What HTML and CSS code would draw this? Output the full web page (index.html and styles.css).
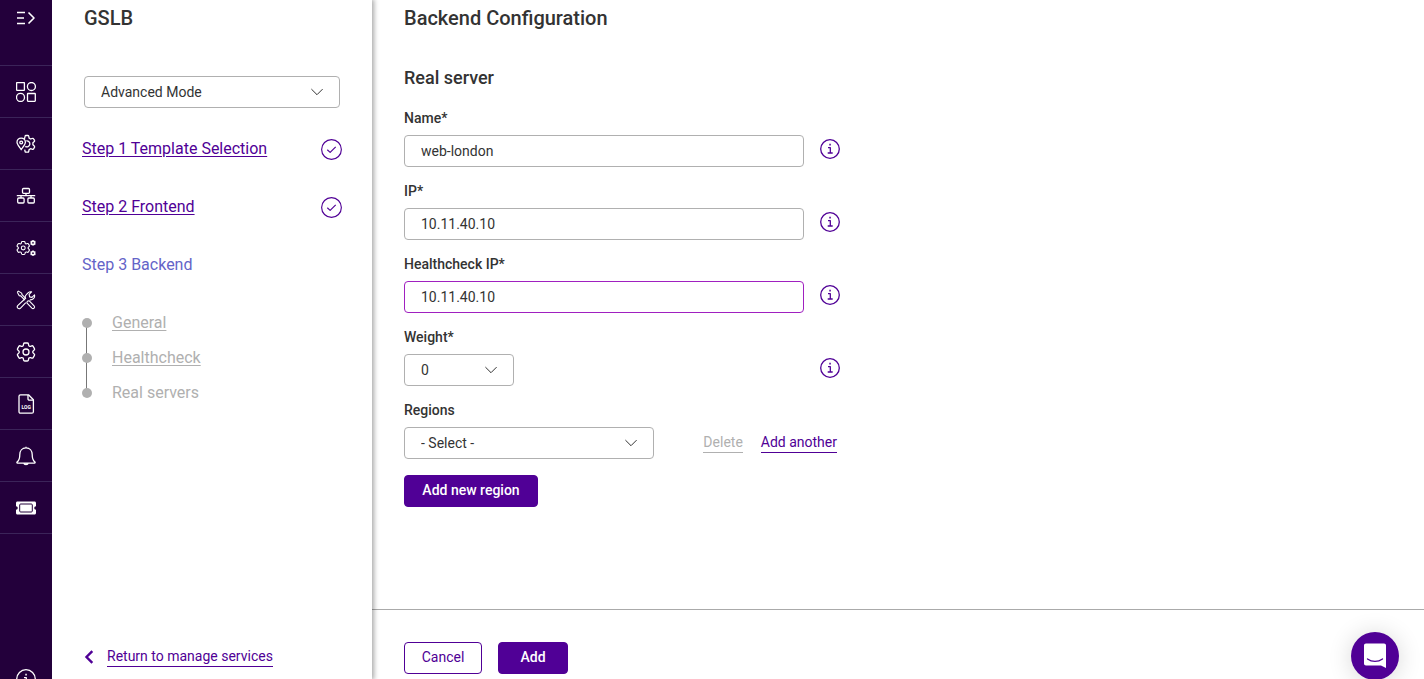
FILE: index.html
```html
<!DOCTYPE html>
<html lang="en">
<head>
<meta charset="utf-8">
<title>GSLB - Backend Configuration</title>
<link rel="stylesheet" href="styles.css">
</head>
<body>
<svg class="defs" aria-hidden="true">
  <defs>
    <path id="gear" d="M9.594 3.94c.09-.542.56-.94 1.11-.94h2.593c.55 0 1.02.398 1.11.94l.213 1.281c.063.374.313.686.645.87.074.04.147.083.22.127.325.196.72.257 1.075.124l1.217-.456a1.125 1.125 0 0 1 1.37.49l1.296 2.247a1.125 1.125 0 0 1-.26 1.431l-1.003.827c-.293.241-.438.613-.43.992a7.723 7.723 0 0 1 0 .255c-.008.378.137.75.43.991l1.004.827c.424.35.534.955.26 1.43l-1.298 2.247a1.125 1.125 0 0 1-1.369.491l-1.217-.456c-.355-.133-.75-.072-1.076.124a6.47 6.47 0 0 1-.22.128c-.331.183-.581.495-.644.869l-.213 1.281c-.09.543-.56.94-1.11.94h-2.594c-.55 0-1.019-.398-1.11-.94l-.213-1.281c-.062-.374-.312-.686-.644-.87a6.52 6.52 0 0 1-.22-.127c-.325-.196-.72-.257-1.076-.124l-1.217.456a1.125 1.125 0 0 1-1.369-.49l-1.297-2.247a1.125 1.125 0 0 1 .26-1.431l1.004-.827c.292-.24.437-.613.43-.991a6.932 6.932 0 0 1 0-.255c.007-.38-.138-.751-.43-.992l-1.004-.827a1.125 1.125 0 0 1-.26-1.43l1.297-2.247a1.125 1.125 0 0 1 1.37-.491l1.216.456c.356.133.751.072 1.076-.124.072-.044.146-.086.22-.128.332-.183.582-.495.644-.869l.214-1.28Z"/>
    <symbol id="info" viewBox="0 0 20 20"><circle cx="10" cy="10" r="9.3"/><path d="M8 8.7h2.3V14M7.7 14h5"/><path d="M9.3 5.7h1.5" stroke-width="1.8"/></symbol>
    <symbol id="check" viewBox="0 0 20 20"><circle cx="10" cy="10" r="9.4"/><path d="M6 10.2l2.7 2.6 5.3-5.3"/></symbol>
    <symbol id="chevron" viewBox="0 0 12 7"><path d="M.4.6L6 6.2 11.6.6"/></symbol>
  </defs>
</svg>
<div class="app">
  <nav class="rail" aria-label="Main">
    <button class="rail-toggle" aria-label="Expand menu"><svg class="icon" viewBox="0 0 20 20"><g stroke-width="1.6"><path d="M1 4.500h8M1 10h7M1 15.500h8M12.500 4.500l5.500 5.500-5.500 5.500"/></g></svg></button>
    <a class="rail-item" href="#" aria-label="Dashboard"><svg class="icon" viewBox="0 0 20 20"><rect x=".6" y=".6" width="7.800" height="7.800" rx=".5"/><circle cx="15.400" cy="4.500" r="4"/><circle cx="4.500" cy="15.400" r="4"/><rect x="11.500" y="11.500" width="7.800" height="7.800" rx=".5"/></svg></a>
    <a class="rail-item" href="#" aria-label="Location settings"><svg class="icon" viewBox="0 0 20 20"><path d="M7.800 4.700l.8-.4.5-2.100c.1-.5.400-.7.900-.7h1.800c.5 0 .8.2.9.7l.4 1.900 1.500.9 1.900-.6c.5-.2.900 0 1.100.4l.9 1.500c.3.4.2.8-.2 1.200l-1.400 1.300v2l1.400 1.300c.4.400.5.700.2 1.200l-.9 1.600c-.2.400-.6.500-1.100.4l-1.900-.6-1.500.9-.4 1.900c-.1.500-.4.700-.9.700H10c-.5 0-.8-.2-.9-.7L8.700 15.600"/><path d="M5.200 15.700C3 12.500 1 10.300 1 8.300a4.200 4.200 0 0 1 8.400 0c0 2-2 4.200-4.200 7.400z"/><circle cx="5.200" cy="8.500" r="1.400"/><path d="M10.300 6.900a3 3 0 1 1-1 5.500"/></svg></a>
    <a class="rail-item" href="#" aria-label="Network"><svg class="icon" viewBox="0 0 20 20"><rect x="6.500" y="2.500" width="7" height="4.800" rx="1"/><path d="M.8 9.700h18.400M10 7.300v2.400M5 9.700V12M15 9.700V12"/><rect x="1.700" y="12" width="6.400" height="5" rx="1"/><rect x="11.900" y="12" width="6.400" height="5" rx="1"/></svg></a>
    <a class="rail-item" href="#" aria-label="Services"><svg class="icon" viewBox="0 0 20 20"><g transform="translate(-1.400 1.300) scale(.72)"><use href="#gear" stroke-width="1.500"/><circle cx="12" cy="12" r="2.700" stroke-width="1.500"/></g><g stroke-width="1.700"><circle cx="17" cy="4.800" r="1.700"/><circle cx="17" cy="15.200" r="1.700"/></g><g stroke-width="1"><path d="M17 2v.8M17 6.800v.8M14.600 3.400l.7.400M18.700 5.800l.7.400M14.600 6.200l.7-.4M18.700 3.800l.7-.4M17 12.400v.8M17 17.200v.8M14.600 13.800l.7.400M18.700 16.200l.7.400M14.600 16.600l.7-.4M18.700 14.200l.7-.4"/></g></svg></a>
    <a class="rail-item" href="#" aria-label="Tools"><svg class="icon thin" viewBox="0 0 20 20"><path d="M1.300 2.200l1.100-1.100 3.300 2 .3 1.600 4 4M8.800 10L4.700 5.900l-1.600-.3-1.800-3.400"/><path d="M11.700 11l1.300-.3 5.100 5.200c1.400 1.500-.7 3.600-2.200 2.200l-5.100-5.200.4-1.300z"/><path d="M9.800 12.600l-5.500 5.700a1.850 1.850 0 0 1-2.600-2.600l7.600-7.200c-.4-1.500 0-2.900 1-3.900l1.700-1.800c1-.9 2.400-1.300 3.600-1l-2.500 2.600.5 2.500 2.400.5 2.500-2.500c.4 1.300 0 2.700-1 3.700-1 1-2.300 1.400-3.700 1.200"/></svg></a>
    <a class="rail-item" href="#" aria-label="Settings"><svg class="icon" viewBox="2 2 20 20"><use href="#gear"/><circle cx="12" cy="12" r="3"/></svg></a>
    <a class="rail-item" href="#" aria-label="Logs"><svg class="icon" viewBox="0 0 20 20"><path d="M4.500.8h8l4.900 5v11.900c0 .9-.6 1.500-1.500 1.500H4.500c-.9 0-1.500-.6-1.500-1.500V2.300C3 1.400 3.600.8 4.500.8z"/><path d="M12 1v3.700c0 1 .5 1.500 1.500 1.500h3.700"/><text class="log-text" x="10.200" y="15.200" text-anchor="middle">LOG</text></svg></a>
    <a class="rail-item" href="#" aria-label="Notifications"><svg class="icon" viewBox="0 0 20 20"><path d="M10 .7v1.200M10 1.900c3.900 0 6.200 2.900 6.200 6.700 0 4.600 1 6.300 2.600 7.300.6.400.4 1.300-.3 1.300h-17c-.7 0-.9-.9-.3-1.300 1.600-1 2.600-2.700 2.600-7.300 0-3.800 2.300-6.700 6.200-6.700zM7.800 17.200c.3 1.800 4.100 1.800 4.400 0"/></svg></a>
    <a class="rail-item" href="#" aria-label="Tickets"><svg class="icon" viewBox="0 0 20 20"><path class="solid" d="M1.500 3.500h17c.9 0 1.500.6 1.500 1.500v3.200a1.800 1.800 0 0 0 0 3.600V15c0 .9-.6 1.500-1.500 1.500h-17C.6 16.500 0 15.900 0 15v-3.200a1.800 1.800 0 0 0 0-3.600V5c0-.9.6-1.500 1.500-1.500z"/><rect class="ticket-inner" x="3.700" y="6" width="12.600" height="8" rx="1"/></svg></a>
    <a class="rail-help" href="#" aria-label="Help"><svg class="icon"><use href="#info"/></svg></a>
  </nav>

  <aside class="panel">
    <h2 class="title">GSLB</h2>
    <div class="select-wrap mode">
      <select class="control" aria-label="Mode"><option>Advanced Mode</option></select>
      <svg class="chevron"><use href="#chevron"/></svg>
    </div>
    <ol class="steps">
      <li class="step"><a href="#">Step 1 Template Selection</a><svg class="icon"><use href="#check"/></svg></li>
      <li class="step"><a href="#">Step 2 Frontend</a><svg class="icon"><use href="#check"/></svg></li>
      <li class="step current">Step 3 Backend</li>
    </ol>
    <ol class="substeps">
      <li><a href="#">General</a></li>
      <li><a href="#">Healthcheck</a></li>
      <li>Real servers</li>
    </ol>
    <div class="return">
      <svg class="back" viewBox="0 0 10 14"><path d="M8.300 1.200L2.500 7l5.800 5.800"/></svg>
      <a class="text-link" href="#">Return to manage services</a>
    </div>
  </aside>

  <main class="main">
    <form class="content" id="server">
      <h1 class="title">Backend Configuration</h1>
      <h2 class="subtitle">Real server</h2>
      <div class="field">
        <label for="name">Name*</label>
        <div class="row"><input class="control" id="name" type="text" value="web-london"><button type="button" class="info" aria-label="About name"><svg class="icon"><use href="#info"/></svg></button></div>
      </div>
      <div class="field">
        <label for="ip">IP*</label>
        <div class="row"><input class="control" id="ip" type="text" value="10.11.40.10"><button type="button" class="info" aria-label="About IP"><svg class="icon"><use href="#info"/></svg></button></div>
      </div>
      <div class="field">
        <label for="hip">Healthcheck IP*</label>
        <div class="row"><input class="control active" id="hip" type="text" value="10.11.40.10"><button type="button" class="info" aria-label="About healthcheck IP"><svg class="icon"><use href="#info"/></svg></button></div>
      </div>
      <div class="field">
        <label for="weight">Weight*</label>
        <div class="row">
          <div class="select-wrap weight"><select class="control" id="weight"><option>0</option></select><svg class="chevron"><use href="#chevron"/></svg></div>
          <button type="button" class="info" aria-label="About weight"><svg class="icon"><use href="#info"/></svg></button>
        </div>
      </div>
      <div class="field">
        <label for="regions">Regions</label>
        <div class="row">
          <div class="select-wrap regions"><select class="control" id="regions"><option>- Select -</option></select><svg class="chevron"><use href="#chevron"/></svg></div>
          <div class="actions"><button type="button" class="text-link" disabled>Delete</button><button type="button" class="text-link">Add another</button></div>
        </div>
      </div>
      <button type="button" class="btn primary new-region">Add new region</button>
    </form>
    <footer class="footer">
      <button type="button" class="btn cancel">Cancel</button>
      <button type="submit" form="server" class="btn primary add">Add</button>
    </footer>
  </main>
</div>
<button class="chat" aria-label="Open chat"><svg viewBox="0 0 24 26"><path class="bubble" d="M3 .5h18c1.200 0 2 .8 2 2V25l-5-2.500H3c-1.200 0-2-.8-2-2v-18c0-1.200.8-2 2-2z"/><path class="smile" d="M4.500 16c4.500 3.200 10.500 3.200 15 0"/></svg></button>
</body>
</html>
```
FILE: styles.css
```css
* { box-sizing: border-box; }

body {
  margin: 0;
  overflow: hidden;
  background: #fff;
  color: #333;
  font: 400 14px/20px Roboto, sans-serif;
}

h1, h2, ol { margin: 0; padding: 0; font-weight: 500; }
ol { list-style: none; font-weight: 400; }
button, input, select { font: inherit; color: inherit; }
button { margin: 0; padding: 0; border: 0; background: none; cursor: pointer; }

.defs { position: absolute; width: 0; height: 0; }

.app { display: flex; height: 100vh; }

.icon {
  display: block;
  flex: none;
  width: 20px;
  height: 20px;
  fill: none;
  stroke: currentColor;
  stroke-width: 1.3;
  stroke-linejoin: round;
}

.icon.thin { stroke-width: 1.1; }

/* Navigation rail */
.rail {
  display: flex;
  flex: none;
  flex-direction: column;
  width: 52px;
  background: #23003b;
  color: #fff;
}

.rail-toggle, .rail-item {
  display: flex;
  flex: none;
  justify-content: center;
  align-items: center;
  height: 52px;
  border-bottom: 1px solid #3b2459;
  color: #fff;
}

.rail-toggle { align-items: flex-start; height: 66px; padding-top: 8px; }
.rail-help { align-self: center; margin: auto 0 -10px; color: #fff; }
.log-text { fill: #fff; stroke: none; font: 700 5px Roboto, sans-serif; }
.solid { fill: #fff; stroke: none; }
.ticket-inner { stroke: #23003b; stroke-width: 1; }

/* Step panel */
.panel {
  z-index: 1;
  display: flex;
  flex: none;
  flex-direction: column;
  width: 320px;
  padding: 6px 32px 12px;
  background: #fff;
  box-shadow: 1px 0 5px 1px rgba(0, 0, 0, .35);
  clip-path: inset(0 -8px 0 0);
}

.title { font-size: 20px; line-height: 24px; }
.mode { margin-top: 46px; }

.control {
  display: block;
  width: 100%;
  height: 32px;
  padding: 0 16px;
  border: 1px solid #b0b0b0;
  border-radius: 4px;
  outline: 0;
  background: #fff;
  appearance: none;
}

.control.active { border-color: #a020c0; }
.select-wrap { position: relative; }

.chevron {
  position: absolute;
  top: 12px;
  right: 17px;
  width: 12px;
  height: 8px;
  fill: none;
  stroke: #333;
  stroke-width: 1;
  pointer-events: none;
}

.steps {
  display: grid;
  gap: 34px;
  margin: 29px -2px 0;
  color: #500096;
  font-size: 16px;
  line-height: 24px;
}

.step { display: flex; justify-content: space-between; align-items: center; }
.step .icon { width: 21px; height: 21px; stroke-width: 1.1; }
.step a, .substeps a { color: inherit; text-underline-offset: 2px; }
.step.current { color: #6464c8; }

.substeps {
  display: grid;
  gap: 11px;
  margin: 34px -2px 0;
  color: #b0b0b0;
  font-size: 16px;
  line-height: 24px;
}

.substeps li { position: relative; padding-left: 30px; }

.substeps li::before {
  content: "";
  position: absolute;
  z-index: 1;
  top: 7px;
  left: 0;
  width: 10px;
  height: 10px;
  border-radius: 50%;
  background: #b0b0b0;
}

.substeps li:not(:last-child)::after {
  content: "";
  position: absolute;
  top: 12px;
  left: 4px;
  width: 1px;
  height: 35px;
  background: #777;
}

.return { display: flex; align-items: center; gap: 13px; margin-top: auto; color: #500096; }
.back { width: 10px; height: 14px; fill: none; stroke: currentColor; stroke-width: 2.4; }

.text-link {
  border-bottom: 1px solid currentColor;
  color: #500096;
  line-height: 20px;
  text-decoration: none;
}

.text-link:disabled { color: #b0b0b0; }

/* Form */
.main { display: flex; flex: 1; flex-direction: column; min-width: 0; }
.content { flex: 1; max-width: 500px; padding: 6px 32px 0; }
.subtitle { margin: 36px 0 18px; font-size: 18px; line-height: 24px; }

.field { margin-bottom: 14px; }
.field label { display: block; margin-bottom: 7px; font-weight: 500; }
.row { display: flex; justify-content: space-between; gap: 16px; }
.info { align-self: flex-start; margin-top: 4px; color: #500096; }
.weight { width: 110px; }
.regions { width: 250px; }
.actions { display: flex; align-items: center; gap: 18px; padding: 0 3px 2px 0; }

.btn {
  height: 32px;
  padding: 0 16px 2px;
  border: 1px solid #500096;
  border-radius: 4px;
  color: #500096;
}

.btn.primary { background: #500096; color: #fff; font-weight: 500; }
.content > .btn { margin-top: 2px; }
.btn.new-region { min-width: 134px; }
.btn.cancel { min-width: 78px; }
.btn.add { min-width: 70px; }

.footer { display: flex; gap: 16px; padding: 32px 32px 5px; border-top: 1px solid #aaa; }

.chat {
  position: fixed;
  right: 25px;
  bottom: -1px;
  display: flex;
  justify-content: center;
  align-items: center;
  width: 48px;
  height: 48px;
  border-radius: 50%;
  background: #500096;
  box-shadow: 0 2px 24px rgba(0, 0, 0, .16);
}

.chat svg { width: 24px; height: 26px; }
.bubble { fill: #fff; }
.smile { fill: none; stroke: #500096; stroke-width: 1.3; stroke-linecap: round; }
```
